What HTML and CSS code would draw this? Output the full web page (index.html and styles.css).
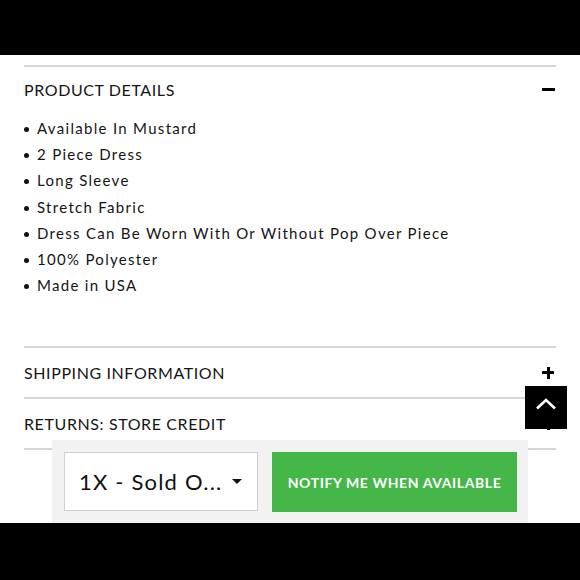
FILE: index.html
```html
<!DOCTYPE html>
<html>
<head>
<meta charset="utf-8">
<link rel="stylesheet" href="styles.css">
</head>
<body>
<div class="page">
  <div class="chrome-top"></div>
  <main class="main">
    <div class="content">
      <section class="acc acc-open">
        <div class="acc-head">
          <span class="acc-title">PRODUCT DETAILS</span>
          <span class="icon-minus"></span>
        </div>
        <ul class="details">
          <li>Available In Mustard</li>
          <li>2 Piece Dress</li>
          <li>Long Sleeve</li>
          <li>Stretch Fabric</li>
          <li>Dress Can Be Worn With Or Without Pop Over Piece</li>
          <li>100% Polyester</li>
          <li>Made in USA</li>
        </ul>
      </section>
      <section class="acc">
        <div class="acc-head">
          <span class="acc-title">SHIPPING INFORMATION</span>
          <span class="icon-plus"></span>
        </div>
      </section>
      <section class="acc">
        <div class="acc-head">
          <span class="acc-title">RETURNS: STORE CREDIT</span>
          <span class="icon-plus"></span>
        </div>
      </section>
      <div class="acc-end"></div>
    </div>

    <button class="to-top" aria-label="Back to top">
      <svg width="22" height="12" viewBox="0 0 22 12"><path d="M2 10.5 L11 2 L20 10.5" fill="none" stroke="#fff" stroke-width="2.6"/></svg>
    </button>

    <div class="buybar">
      <div class="select">
        <span class="select-text">1X - Sold O...</span>
        <span class="caret"></span>
      </div>
      <button class="notify">NOTIFY ME WHEN AVAILABLE</button>
    </div>
  </main>
  <div class="chrome-bottom"></div>
</div>
</body>
</html>
```

FILE: styles.css
```css
html, body {
  margin: 0;
  padding: 0;
  background: #fff;
}
body {
  font-family: "Lato", "Liberation Sans", sans-serif;
  color: #111;
}
.page {
  width: 580px;
  height: 580px;
  display: flex;
  flex-direction: column;
  overflow: hidden;
}
.chrome-top {
  height: 55px;
  background: #000;
  flex: none;
}
.chrome-bottom {
  height: 57px;
  background: #000;
  flex: none;
}
.main {
  flex: 1;
  position: relative;
  overflow: hidden;
}
.content {
  padding: 10px 24px 0 24px;
}
.acc {
  border-top: 2px solid #d6d6d6;
}
.acc-head {
  height: 49px;
  display: flex;
  align-items: center;
  justify-content: space-between;
}
.acc-open .acc-head {
  height: 44px;
}
.acc-title {
  font-size: 16px;
  letter-spacing: 0.6px;
  color: #151515;
}
.icon-minus {
  width: 13px;
  height: 3px;
  background: #000;
  margin-right: 1px;
}
.icon-plus {
  position: relative;
  width: 12px;
  height: 12px;
  margin-right: 2px;
}
.icon-plus::before,
.icon-plus::after {
  content: "";
  position: absolute;
  background: #000;
}
.icon-plus::before {
  left: 0;
  top: 4.5px;
  width: 12px;
  height: 3px;
}
.icon-plus::after {
  left: 4.5px;
  top: 0;
  width: 3px;
  height: 12px;
}
.details {
  list-style: none;
  margin: 0;
  padding: 4px 0 48px 0;
}
.details li {
  position: relative;
  padding-left: 13px;
  font-size: 15px;
  line-height: 26.2px;
  letter-spacing: 1.3px;
  color: #151515;
}
.details li::before {
  content: "";
  position: absolute;
  left: 0;
  top: 12px;
  width: 5px;
  height: 5px;
  border-radius: 50%;
  background: #111;
}
.acc-end {
  border-top: 2px solid #d6d6d6;
}
.to-top {
  position: absolute;
  left: 525px;
  top: 331px;
  width: 42px;
  height: 43px;
  background: #000;
  border: none;
  padding: 0;
  display: flex;
  align-items: center;
  justify-content: center;
  padding-bottom: 8px;
}
.buybar {
  position: absolute;
  left: 52px;
  bottom: 0;
  width: 476px;
  height: 83px;
  box-sizing: border-box;
  padding: 12px 11px 11px 12px;
  background: #f2f2f2;
  display: flex;
  gap: 14px;
}
.select {
  width: 194px;
  height: 59px;
  box-sizing: border-box;
  border: 1px solid #cfcfcf;
  background: #fff;
  display: flex;
  align-items: center;
  padding-left: 14px;
  padding-right: 15px;
  justify-content: space-between;
}
.select-text {
  font-size: 22px;
  letter-spacing: 1.2px;
  color: #111;
}
.caret {
  width: 0;
  height: 0;
  border-left: 5px solid transparent;
  border-right: 5px solid transparent;
  border-top: 5px solid #111;
}
.notify {
  flex: 1;
  height: 60px;
  background: #44b748;
  border: none;
  color: #fff;
  font-family: "Lato", "Liberation Sans", sans-serif;
  font-weight: 700;
  font-size: 14px;
  letter-spacing: 0.6px;
  padding: 0;
}
```
